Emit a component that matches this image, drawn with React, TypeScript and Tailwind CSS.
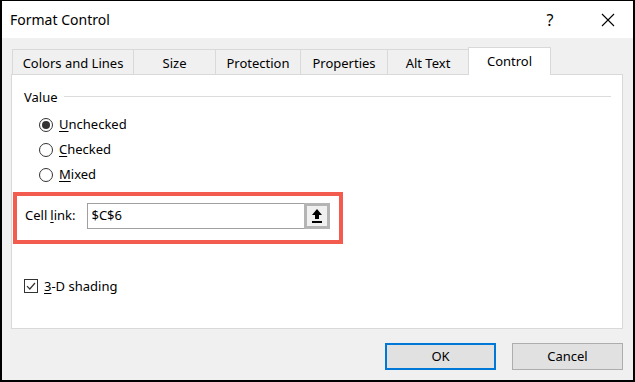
import { useState } from 'react';

const tabs = [
  { label: 'Colors and Lines', width: 'w-[121px]' },
  { label: 'Size', width: 'w-[82px]' },
  { label: 'Protection', width: 'w-[85px]' },
  { label: 'Properties', width: 'w-[87px]' },
  { label: 'Alt Text', width: 'w-[81px]' },
];

function Radio({ checked, accessKey, rest }: { checked: boolean; accessKey: string; rest: string }) {
  return (
    <div className="flex items-center h-[25px]">
      <span className="w-[14px] h-[14px] rounded-full border border-[#333333] bg-white flex items-center justify-center">
        {checked && <span className="w-[8px] h-[8px] rounded-full bg-[#333333]" />}
      </span>
      <span className="ml-[6px] text-[13px] text-black">
        <span className="underline underline-offset-2">{accessKey}</span>
        {rest}
      </span>
    </div>
  );
}

export default function App() {
  const [value, setValue] = useState('Unchecked');

  return (
    <div className="w-[635px] h-[382px] border-x-2 border-b-2 border-t border-black bg-[#f0f0f0] flex flex-col font-['Noto_Sans',sans-serif] text-black">
      {/* Title bar */}
      <div className="h-[37px] bg-white flex items-center pl-[8px] shrink-0">
        <span className="text-[14px]">Format Control</span>
        <span className="ml-auto text-[16px] w-[20px] text-center">?</span>
        <span className="ml-[38px] mr-[15px] w-[20px] flex justify-center">
          <svg width="14" height="14" viewBox="0 0 14 14">
            <path d="M1 1L13 13M13 1L1 13" stroke="#000" strokeWidth="1.1" fill="none" />
          </svg>
        </span>
      </div>

      <div className="flex-1 pl-[9px] pr-[10px] pt-[9px] flex flex-col">
        {/* Tabs */}
        <div className="flex items-end h-[27px] ml-[1px]">
          {tabs.map((t) => (
            <div
              key={t.label}
              className={`${t.width} h-[25px] border-t border-l border-[#d9d9d9] bg-[#f0f0f0] flex items-center justify-center text-[13px] pt-[3px]`}
            >
              {t.label}
            </div>
          ))}
          <div className="w-[83px] h-[28px] -mb-px relative z-10 border-t border-x border-[#d9d9d9] bg-white flex items-center justify-center text-[13px]">
            Control
          </div>
        </div>

        {/* Panel */}
        <div className="h-[255px] border border-[#d9d9d9] bg-white flex flex-col">
          <div className="flex items-center pl-[12px] pr-[11px] pt-[13px]">
            <span className="text-[13px]">Value</span>
            <div className="flex-1 h-px bg-[#dcdcdc] ml-[6px] -mt-[3px]" />
          </div>

          <div className="pl-[27px] mt-[5px] flex flex-col">
            {['Unchecked', 'Checked', 'Mixed'].map((v) => (
              <div key={v} onClick={() => setValue(v)}>
                <Radio checked={value === v} accessKey={v[0]} rest={v.slice(1)} />
              </div>
            ))}
          </div>

          {/* Highlighted cell link */}
          <div className="ml-[1px] mt-[4px] w-[330px] h-[52px] border-4 border-[#f35b4e] flex items-start pt-[7px] pl-[8px]">
            <span className="text-[13px] h-[26px] flex items-center">
              Cell <span className="underline underline-offset-2 ml-[3px]">l</span>ink:
            </span>
            <div className="ml-[12px] w-[243px] h-[26px] border border-[#a0a0a0] flex items-center">
              <span className="pl-[3px] text-[13px] flex-1">$C$6</span>
              <div className="w-[26px] h-[26px] -mr-px -my-px border-[3px] border-[#b4b4b4] bg-[#f0f0f0] flex items-center justify-center">
                <svg width="12" height="14" viewBox="0 0 12 14">
                  <path d="M6 0L11 6H8V10H4V6H1Z" fill="#000" />
                  <rect x="1" y="12" width="10" height="2" fill="#000" />
                </svg>
              </div>
            </div>
          </div>

          {/* 3-D shading */}
          <div className="flex items-center ml-[12px] mt-[33px]">
            <span className="w-[14px] h-[14px] border border-[#333333] flex items-center justify-center">
              <svg width="10" height="10" viewBox="0 0 10 10">
                <path d="M1 5.2L3.8 8L9 2" stroke="#333" strokeWidth="1.2" fill="none" />
              </svg>
            </span>
            <span className="ml-[6px] text-[13px]">
              <span className="underline underline-offset-2">3</span>-D shading
            </span>
          </div>
        </div>

        {/* Buttons */}
        <div className="flex justify-end gap-[16px] mt-[14px]">
          <button className="w-[111px] h-[27px] border-2 border-[#0078d7] bg-[#e1e1e1] text-[13px] pt-[1px]">OK</button>
          <button className="w-[111px] h-[27px] border border-[#adadad] bg-[#e1e1e1] text-[13px] pt-[1px]">Cancel</button>
        </div>
      </div>
    </div>
  );
}
